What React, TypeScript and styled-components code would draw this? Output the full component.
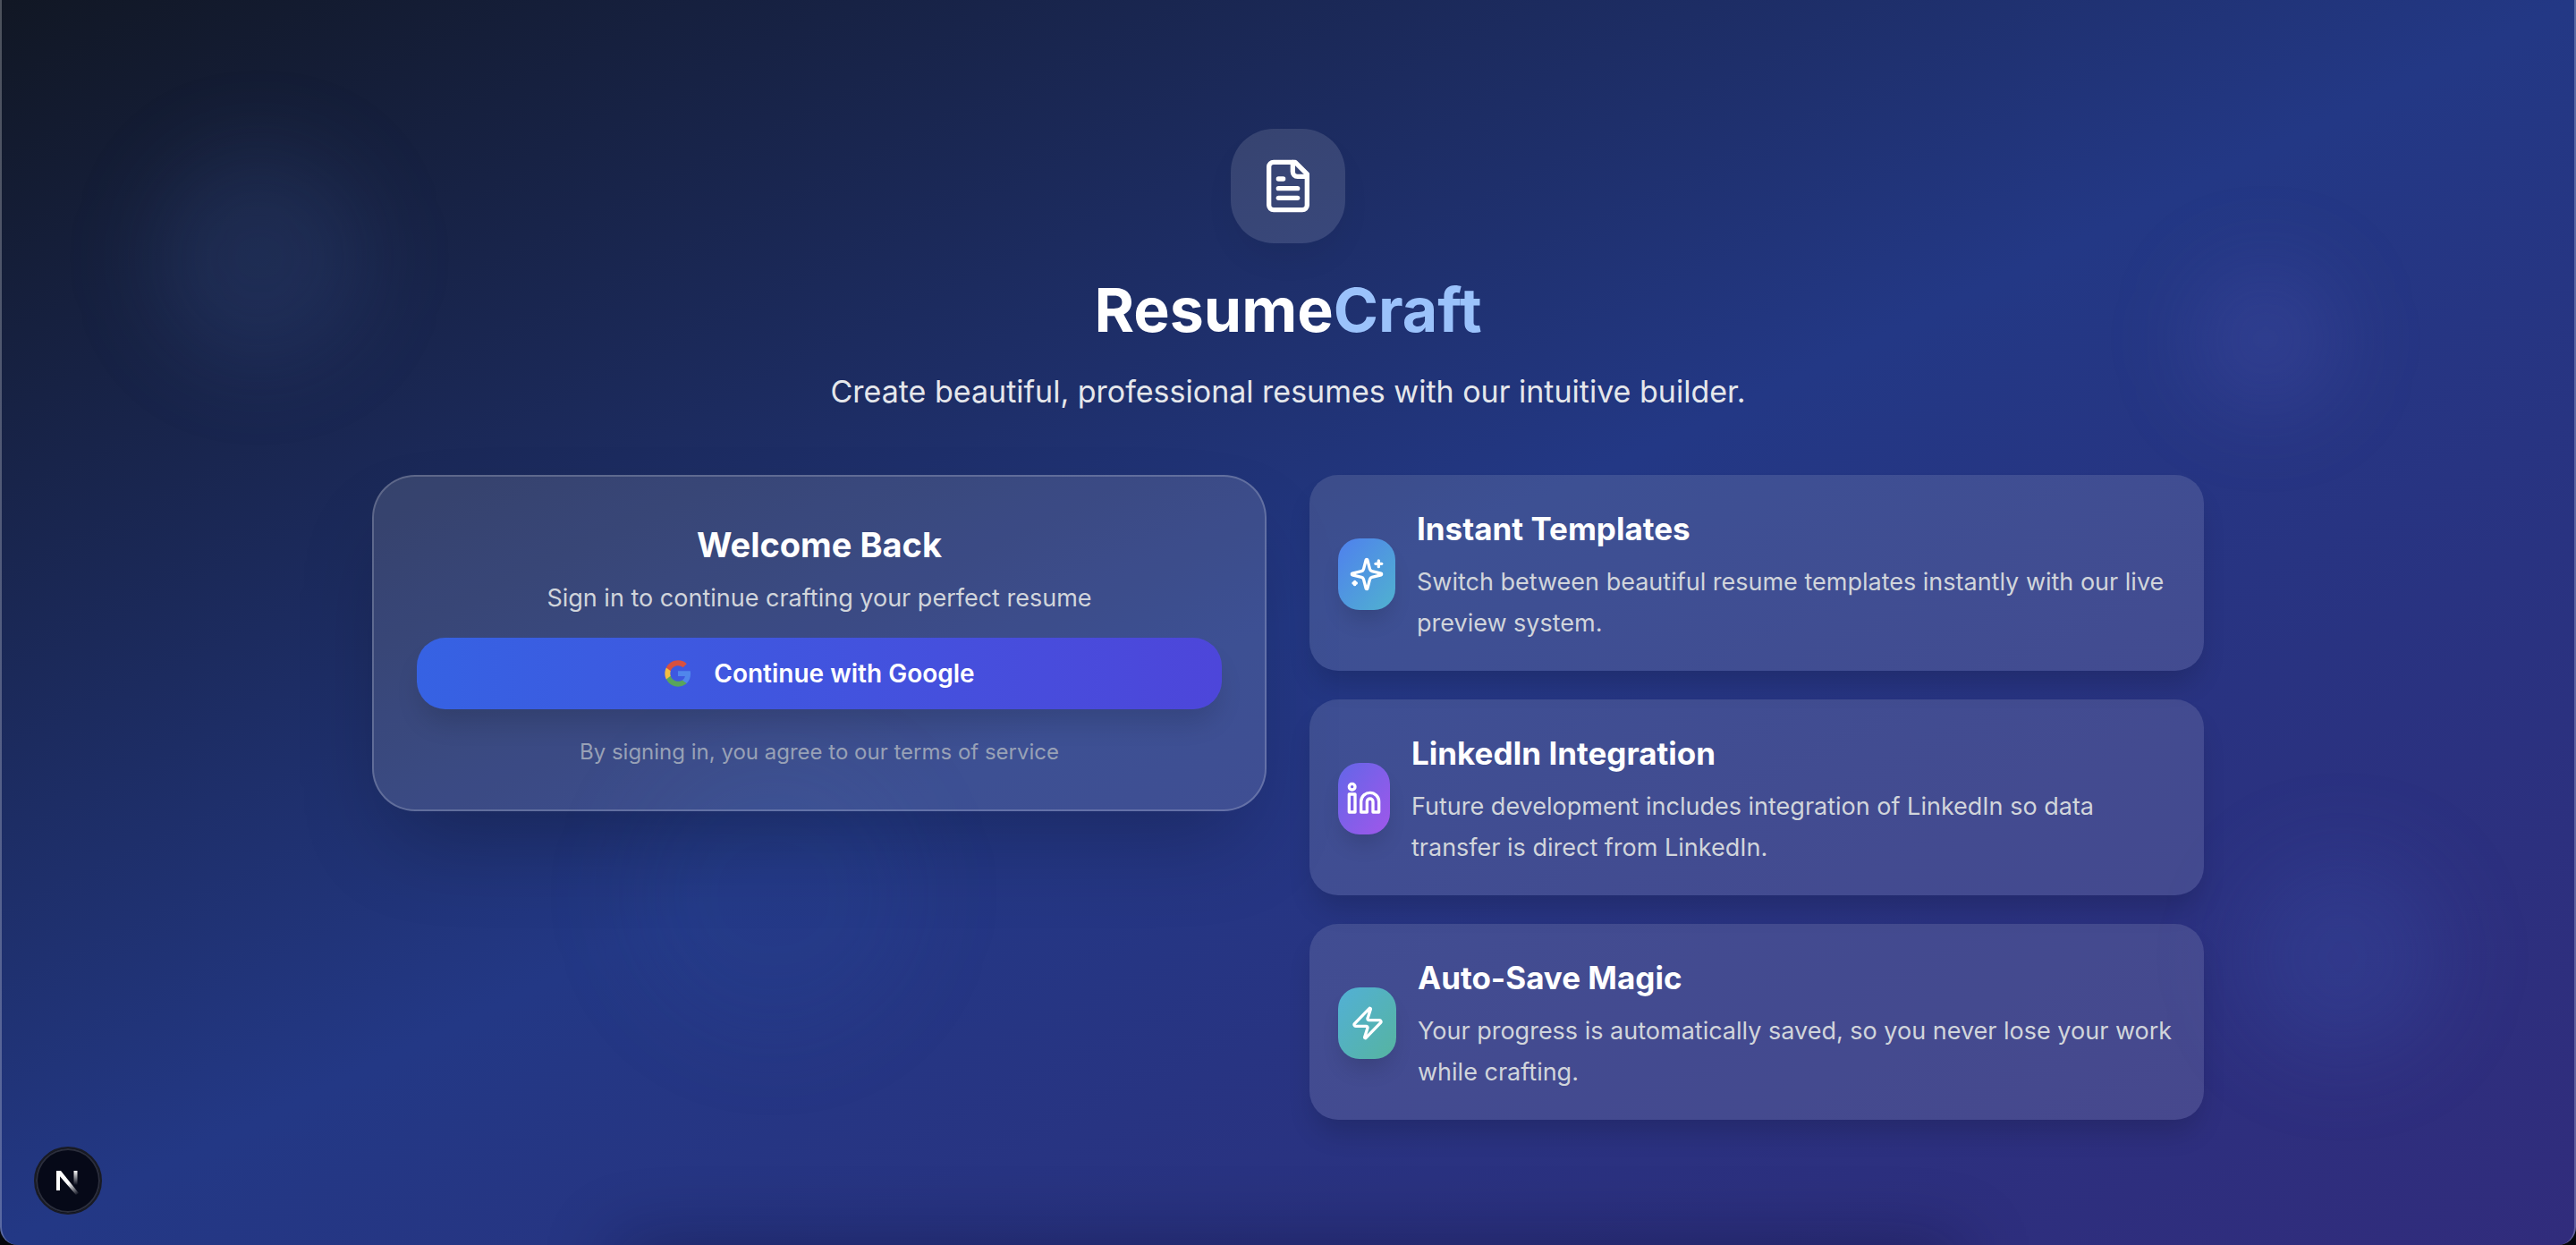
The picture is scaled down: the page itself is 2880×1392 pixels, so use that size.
import React from "react";
import styled, { createGlobalStyle } from "styled-components";
import { Linkedin, Zap } from "lucide-react";

const GlobalStyle = createGlobalStyle`
  *, *::before, *::after { box-sizing: border-box; }
  body {
    margin: 0;
    background: #05070d;
    font-family: Inter, "Liberation Sans", sans-serif;
    -webkit-font-smoothing: antialiased;
  }
  h1, h2, h3, p, ul { margin: 0; padding: 0; }
`;

const Page = styled.main`
  position: relative;
  min-height: 100vh;
  overflow: hidden;
  padding: 144px 48px 128px;
  color: #fff;
  border: 2px solid rgba(255, 255, 255, 0.25);
  border-width: 0 2px;
  border-radius: 0 0 20px 20px;
  background: linear-gradient(to bottom right, #111724, #233885 50%, #312c7c) border-box;
`;

const Glow = styled.span<{ $x: string; $y: string; $size: number; $color: string }>`
  position: absolute;
  left: ${(p) => p.$x};
  top: ${(p) => p.$y};
  width: ${(p) => p.$size}px;
  height: ${(p) => p.$size}px;
  border-radius: 50%;
  background: ${(p) => p.$color};
  filter: blur(48px);
  transform: translate(-50%, -50%);
`;

const BottomShade = styled.span`
  position: absolute;
  left: 24%;
  right: 24%;
  bottom: -64px;
  height: 64px;
  box-shadow: 0 0 80px rgba(10, 10, 40, 0.4);
`;

const Content = styled.div`
  position: relative;
  max-width: 2048px;
  margin: 0 auto;
`;

const Header = styled.header`
  display: flex;
  flex-direction: column;
  align-items: center;
  text-align: center;
  margin-bottom: 63px;
`;

const Logo = styled.div`
  display: grid;
  place-items: center;
  width: 128px;
  height: 128px;
  margin-bottom: 32px;
  border-radius: 48px;
  background: rgba(255, 255, 255, 0.12);
  box-shadow: 0 20px 40px -10px rgba(0, 0, 0, 0.08);
`;

const Brand = styled.h1`
  font-size: 68px;
  line-height: 84px;
  font-weight: 700;
`;

const BrandAccent = styled.span`
  color: #9bc2fb;
`;

const Tagline = styled.p`
  margin-top: 20px;
  font-size: 34px;
  line-height: 60px;
  color: #e5e7eb;
`;

const Columns = styled.div`
  display: grid;
  grid-template-columns: repeat(2, minmax(0, 1fr));
  gap: 48px;
  align-items: start;
`;

const SignInCard = styled.section`
  display: flex;
  flex-direction: column;
  align-items: center;
  padding: 48px;
  border: 2px solid rgba(255, 255, 255, 0.2);
  border-radius: 48px;
  background: rgba(255, 255, 255, 0.12);
  box-shadow: 0 50px 100px -24px rgba(0, 0, 0, 0.25);
  text-align: center;
`;

const CardTitle = styled.h2`
  font-size: 38px;
  line-height: 56px;
  font-weight: 700;
`;

const CardText = styled.p`
  margin-top: 9px;
  font-size: 27px;
  line-height: 46px;
  color: #d1d5db;
`;

const GoogleButton = styled.button`
  display: flex;
  align-items: center;
  justify-content: center;
  gap: 24px;
  width: 100%;
  height: 80px;
  margin: 21px 0 32px;
  border: 0;
  border-radius: 32px;
  background: linear-gradient(to right, #3662e3, #4d46da);
  box-shadow: 0 20px 30px -6px rgba(0, 0, 0, 0.14);
  color: #fff;
  font: 600 28px/40px Inter, "Liberation Sans", sans-serif;
  cursor: pointer;
`;

const Terms = styled.p`
  font-size: 24px;
  line-height: 32px;
  color: #98a1b6;
`;

const FeatureList = styled.ul`
  display: flex;
  flex-direction: column;
  gap: 32px;
  list-style: none;
`;

const FeatureCard = styled.li`
  display: flex;
  align-items: center;
  gap: 24px;
  padding: 32px 32px 30px;
  border-radius: 32px;
  background: rgba(255, 255, 255, 0.12);
  box-shadow: 0 20px 30px -6px rgba(0, 0, 0, 0.16);
`;

const FeatureIcon = styled.div<{ $from: string; $to: string; $width: number }>`
  display: grid;
  place-items: center;
  flex: none;
  width: ${(p) => p.$width}px;
  height: 80px;
  border-radius: 24px;
  background: linear-gradient(to bottom right, ${(p) => p.$from}, ${(p) => p.$to});
  box-shadow: 0 16px 24px -6px rgba(0, 0, 0, 0.14);
`;

const FeatureTitle = styled.h3`
  font-size: 35px;
  line-height: 56px;
  font-weight: 700;
`;

const FeatureText = styled.p`
  margin-top: 9px;
  font-size: 27px;
  line-height: 46px;
  color: #d1d5db;
`;

const DevButton = styled.button`
  position: fixed;
  left: 38px;
  bottom: 34px;
  display: grid;
  place-items: center;
  width: 76px;
  height: 76px;
  padding: 0;
  border: 2px solid #191b24;
  border-radius: 50%;
  background: #060918;
  box-shadow: inset 0 0 0 2px #2b2e3c;
  cursor: pointer;
`;

const FileIcon = () => (
  <svg width="64" height="64" viewBox="0 0 24 24" fill="none" stroke="#fff" strokeWidth="2" strokeLinecap="round" strokeLinejoin="round" aria-hidden="true">
    <path d="M15 2H6a2 2 0 0 0-2 2v16a2 2 0 0 0 2 2h12a2 2 0 0 0 2-2V7Z" />
    <path d="M14 2v4a2 2 0 0 0 2 2h4" />
    <path d="M10 9H8" />
    <path d="M16 13H8" />
    <path d="M16 17H8" />
  </svg>
);

const SparklesIcon = ({ size = 40 }: { size?: number }) => (
  <svg width={size} height={size} viewBox="0 0 24 24" fill="none" stroke="#fff" strokeWidth="2" strokeLinecap="round" strokeLinejoin="round" aria-hidden="true">
    <path d="M9.937 15.5A2 2 0 0 0 8.500 14.063l-6.135-1.582a.5.5 0 0 1 0-.962L8.500 9.936A2 2 0 0 0 9.937 8.500l1.582-6.135a.5.5 0 0 1 .963 0L14.063 8.500A2 2 0 0 0 15.500 9.937l6.135 1.581a.5.5 0 0 1 0 .964L15.500 14.063a2 2 0 0 0-1.437 1.437l-1.582 6.135a.5.5 0 0 1-.963 0z" />
    <path d="M20 3v4" />
    <path d="M22 5h-4" />
    <path d="M4 17v2" />
    <path d="M5 18H3" />
  </svg>
);

const GoogleIcon = () => (
  <svg width="32" height="32" viewBox="0 0 24 24" aria-hidden="true">
    <path fill="#5086ec" d="M22.56 12.25c0-.78-.07-1.53-.2-2.25H12v4.26h5.92c-.26 1.37-1.04 2.53-2.21 3.31v2.77h3.57c2.08-1.92 3.28-4.74 3.28-8.09z" />
    <path fill="#58a55c" d="M12 23c2.97 0 5.46-.98 7.28-2.66l-3.57-2.77c-.98.66-2.23 1.06-3.71 1.06-2.86 0-5.29-1.93-6.16-4.53H2.18v2.84C3.99 20.53 7.7 23 12 23z" />
    <path fill="#f2bd42" d="M5.84 14.09c-.22-.66-.35-1.36-.35-2.09s.13-1.43.35-2.09V7.07H2.18C1.43 8.55 1 10.22 1 12s.43 3.45 1.18 4.93l2.85-2.22.81-.62z" />
    <path fill="#d9503f" d="M12 5.38c1.62 0 3.06.56 4.21 1.64l3.15-3.15C17.45 2.09 14.97 1 12 1 7.7 1 3.99 3.47 2.18 7.07l3.66 2.84c.87-2.6 3.3-4.53 6.16-4.53z" />
  </svg>
);

const NextIcon = () => (
  <svg width="32" height="32" viewBox="0 0 32 32" fill="none" aria-hidden="true">
    <defs>
      <linearGradient id="nextDiagonal" gradientUnits="userSpaceOnUse" x1="17" y1="19" x2="27" y2="32">
        <stop stopColor="#fff" />
        <stop offset="1" stopColor="#fff" stopOpacity="0" />
      </linearGradient>
      <linearGradient id="nextStem" gradientUnits="userSpaceOnUse" x1="24" y1="5" x2="24" y2="21">
        <stop stopColor="#fff" />
        <stop offset="1" stopColor="#fff" stopOpacity="0" />
      </linearGradient>
    </defs>
    <path d="M5 27V5" stroke="#fff" strokeWidth="4" />
    <path d="M3 5h5l20 25-3 2L5 9z" fill="url(#nextDiagonal)" />
    <path d="M24.500 5v16" stroke="url(#nextStem)" strokeWidth="4" />
  </svg>
);

const features = [
  {
    title: "Instant Templates",
    text: "Switch between beautiful resume templates instantly with our live preview system.",
    icon: <SparklesIcon />,
    from: "#4f80ee",
    to: "#50b2cf",
    width: 64,
  },
  {
    title: "LinkedIn Integration",
    text: "Future development includes integration of LinkedIn so data transfer is direct from LinkedIn.",
    icon: <Linkedin size={40} aria-hidden="true" />,
    from: "#6366e8",
    to: "#a057ea",
    width: 58,
  },
  {
    title: "Auto-Save Magic",
    text: "Your progress is automatically saved, so you never lose your work while crafting.",
    icon: <Zap size={40} aria-hidden="true" />,
    from: "#52b0d6",
    to: "#56b4a0",
    width: 65,
  },
];

export default function App() {
  return (
    <>
      <GlobalStyle />
      <Page>
        <Glow $x="10%" $y="288px" $size={240} $color="rgba(75, 115, 190, 0.14)" />
        <Glow $x="88%" $y="379px" $size={160} $color="rgba(99, 102, 200, 0.19)" />
        <Glow $x="30%" $y="1000px" $size={320} $color="rgba(45, 85, 165, 0.11)" />
        <Glow $x="91%" $y="1070px" $size={224} $color="rgba(65, 95, 190, 0.2)" />
        <BottomShade />
        <Content>
          <Header>
            <Logo>
              <FileIcon />
            </Logo>
            <Brand>
              Resume<BrandAccent>Craft</BrandAccent>
            </Brand>
            <Tagline>Create beautiful, professional resumes with our intuitive builder.</Tagline>
          </Header>
          <Columns>
            <SignInCard>
              <CardTitle>Welcome Back</CardTitle>
              <CardText>Sign in to continue crafting your perfect resume</CardText>
              <GoogleButton type="button">
                <GoogleIcon />
                Continue with Google
              </GoogleButton>
              <Terms>By signing in, you agree to our terms of service</Terms>
            </SignInCard>
            <FeatureList>
              {features.map(({ title, text, icon, from, to, width }) => (
                <FeatureCard key={title}>
                  <FeatureIcon $from={from} $to={to} $width={width}>
                    {icon}
                  </FeatureIcon>
                  <div>
                    <FeatureTitle>{title}</FeatureTitle>
                    <FeatureText>{text}</FeatureText>
                  </div>
                </FeatureCard>
              ))}
            </FeatureList>
          </Columns>
        </Content>
      </Page>
      <DevButton type="button" aria-label="Open Next.js Dev Tools">
        <NextIcon />
      </DevButton>
    </>
  );
}
